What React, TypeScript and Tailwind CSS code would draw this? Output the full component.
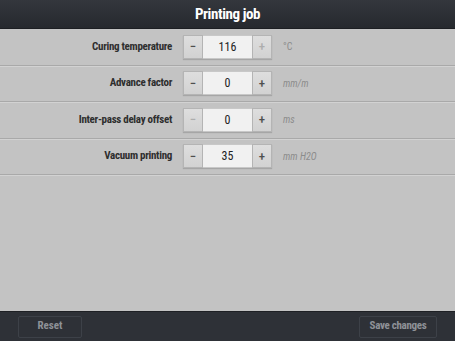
const font = { fontFamily: '"Roboto Condensed", "DejaVu Sans Condensed", sans-serif' };

type Row = {
  label: string;
  value: string;
  unit: string;
  minusOff?: boolean;
  plusOff?: boolean;
  unitStyle?: "normal" | "italic";
};

const rows: Row[] = [
  { label: "Curing temperature", value: "116", unit: "°C", plusOff: true, unitStyle: "normal" },
  { label: "Advance factor", value: "0", unit: "mm/m" },
  { label: "Inter-pass delay offset", value: "0", unit: "ms", minusOff: true },
  { label: "Vacuum printing", value: "35", unit: "mm H2O" },
];

function StepButton({ sign, off }: { sign: string; off?: boolean }) {
  return (
    <div
      className={`w-[20px] h-[24px] flex items-center justify-center bg-gradient-to-b from-[#dedede] to-[#d2d2d2] border border-[#b4b4b4] text-[13px] font-medium ${
        off ? "text-[#adadad]" : "text-[#4f4f4f]"
      }`}
    >
      {sign}
    </div>
  );
}

export default function App() {
  return (
    <div className="w-[455px] h-[341px] flex flex-col bg-[#c3c3c3] overflow-hidden" style={font}>
      <div className="h-[29px] shrink-0 flex items-center justify-center bg-gradient-to-b from-[#34373d] to-[#26292e] border-b border-[#1c1e22]">
        <span className="text-white text-[15px] font-bold tracking-[-0.4px]">Printing job</span>
      </div>

      <div className="flex-1 flex flex-col">
        {rows.map((r) => (
          <div
            key={r.label}
            className="h-[36.5px] flex items-center border-b border-[#a9a9a9] shadow-[0_1px_0_#d2d2d2]"
          >
            <div className="w-[183px] pr-[11px] text-right text-[11px] font-bold text-[#2e2e2e] tracking-[-0.3px] whitespace-nowrap">
              {r.label}
            </div>
            <div className="flex items-center shadow-[0_1px_1px_rgba(0,0,0,0.15)]">
              <StepButton sign="−" off={r.minusOff} />
              <div className="w-[49px] h-[24px] flex items-center justify-center bg-[#f1f1f1] border-y border-[#c8c8c8] text-[12px] text-[#222]">
                {r.value}
              </div>
              <StepButton sign="+" off={r.plusOff} />
            </div>
            <div
              className={`ml-[11px] text-[10px] text-[#8c8c8c] whitespace-nowrap ${r.unitStyle === "normal" ? "" : "italic"}`}
            >
              {r.unit}
            </div>
          </div>
        ))}
      </div>

      <div className="h-[30px] shrink-0 flex items-center justify-between px-[18px] bg-[#2e3137] border-t border-[#1e2024]">
        <div className="w-[64px] h-[22px] flex items-center justify-center border border-[#3d4148] rounded-[2px] text-[11px] font-bold text-[#8e9298]">
          Reset
        </div>
        <div className="w-[78px] h-[22px] flex items-center justify-center border border-[#3d4148] rounded-[2px] text-[11px] font-bold text-[#8e9298] tracking-[-0.3px] whitespace-nowrap">
          Save changes
        </div>
      </div>
    </div>
  );
}
